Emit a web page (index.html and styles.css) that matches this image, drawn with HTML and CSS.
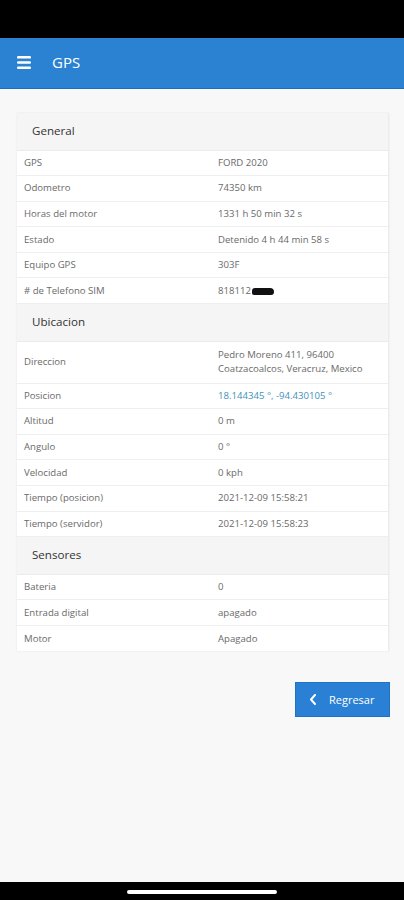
FILE: index.html
```html
<!DOCTYPE html>
<html lang="es">
<head>
<meta charset="utf-8">
<title>GPS</title>
<link rel="stylesheet" href="styles.css">
</head>
<body>
<div class="screen">
  <div class="statusbar"></div>
  <header class="appbar">
    <svg class="menu" width="14" height="13" viewBox="0 0 14 13"><rect x="0" y="0" width="14" height="2.6" rx="1.2" fill="#fff"/><rect x="0" y="5.2" width="14" height="2.6" rx="1.2" fill="#fff"/><rect x="0" y="10.4" width="14" height="2.6" rx="1.2" fill="#fff"/></svg>
    <span class="title">GPS</span>
  </header>
  <main class="content">
    <section class="card">
      <div class="section-head">General</div>
      <div class="row"><span class="label">GPS</span><span class="value">FORD 2020</span></div>
      <div class="row"><span class="label">Odometro</span><span class="value">74350 km</span></div>
      <div class="row"><span class="label">Horas del motor</span><span class="value">1331 h 50 min 32 s</span></div>
      <div class="row"><span class="label">Estado</span><span class="value">Detenido 4 h 44 min 58 s</span></div>
      <div class="row"><span class="label">Equipo GPS</span><span class="value">303F</span></div>
      <div class="row"><span class="label"># de Telefono SIM</span><span class="value">818112<span class="redact"></span></span></div>

      <div class="section-head">Ubicacion</div>
      <div class="row tall"><span class="label">Direccion</span><span class="value">Pedro Moreno 411, 96400<br>Coatzacoalcos, Veracruz, Mexico</span></div>
      <div class="row"><span class="label">Posicion</span><span class="value link">18.144345 °, -94.430105 °</span></div>
      <div class="row"><span class="label">Altitud</span><span class="value">0 m</span></div>
      <div class="row"><span class="label">Angulo</span><span class="value">0 °</span></div>
      <div class="row"><span class="label">Velocidad</span><span class="value">0 kph</span></div>
      <div class="row"><span class="label">Tiempo (posicion)</span><span class="value">2021-12-09 15:58:21</span></div>
      <div class="row"><span class="label">Tiempo (servidor)</span><span class="value">2021-12-09 15:58:23</span></div>

      <div class="section-head">Sensores</div>
      <div class="row"><span class="label">Bateria</span><span class="value">0</span></div>
      <div class="row"><span class="label">Entrada digital</span><span class="value">apagado</span></div>
      <div class="row last"><span class="label">Motor</span><span class="value">Apagado</span></div>
    </section>
    <div class="actions">
      <button class="btn-back">
        <svg width="8" height="11" viewBox="0 0 8 11"><path d="M6 1 L2 5.5 L6 10" fill="none" stroke="#fff" stroke-width="2" stroke-linecap="round" stroke-linejoin="round"/></svg>
        <span>Regresar</span>
      </button>
    </div>
  </main>
  <div class="navbar"><div class="home"></div></div>
</div>
</body>
</html>
```
FILE: styles.css
```css
* { box-sizing: border-box; }
html, body { margin: 0; padding: 0; }
body {
  font-family: "Open Sans", "Noto Sans", sans-serif;
  background: #000;
}
.screen {
  width: 404px;
  height: 900px;
  display: flex;
  flex-direction: column;
  background: #f8f8f8;
}
.statusbar {
  height: 38px;
  background: #000;
  flex: none;
}
.appbar {
  height: 51px;
  flex: none;
  background: #2b82d3;
  border-bottom: 1px solid #1f6db8;
  display: flex;
  align-items: center;
  padding-left: 17px;
  gap: 21px;
}
.menu { display: block; margin-top: -2px; }
.title {
  color: #fff;
  font-size: 15px;
  margin-top: -2px;
}
.content {
  flex: 1;
  padding: 24px 15px 0 17px;
  display: flex;
  flex-direction: column;
}
.card {
  background: #fff;
  box-shadow: 0 0 2px rgba(0,0,0,0.08);
  border-right: 1px solid #ececec;
}
.section-head {
  background: #f5f5f5;
  color: #333;
  font-size: 11.6px;
  line-height: 16px;
  padding: 10px 15px 10px 15px;
  height: 37.5px;
  border-bottom: 1px solid #ebebeb;
}
.row {
  display: grid;
  grid-template-columns: 194px 1fr;
  align-items: center;
  font-size: 9.6px;
  line-height: 14px;
  color: #6a6a6a;
  padding: 4.5px 7px;
  border-bottom: 1px solid #efefef;
  min-height: 25.6px;
}
.row.tall { padding-top: 6.5px; padding-bottom: 6.5px; }
.row.last { border-bottom: none; }
.link { color: #3f92b8; }
.redact {
  display: inline-block;
  width: 22px;
  height: 7px;
  background: #111;
  border-radius: 3px 4px 3px 2px;
  vertical-align: -1px;
  margin-left: 1px;
}
.actions {
  display: flex;
  justify-content: flex-end;
  margin-top: 31px;
  margin-right: -1px;
}
.btn-back {
  width: 95px;
  height: 35px;
  background: #2a80d4;
  border: 1px solid #2172c2;
  color: #fff;
  font-family: "Open Sans", "Noto Sans", sans-serif;
  font-size: 11px;
  display: flex;
  align-items: center;
  padding: 0 0 0 13px;
  gap: 12px;
  cursor: pointer;
}
.btn-back svg { display: block; }
.navbar {
  height: 18px;
  flex: none;
  background: #000;
  display: flex;
  justify-content: center;
  align-items: center;
}
.home {
  width: 150px;
  height: 4px;
  border-radius: 2px;
  background: #fff;
  margin-top: 2px;
}
```
